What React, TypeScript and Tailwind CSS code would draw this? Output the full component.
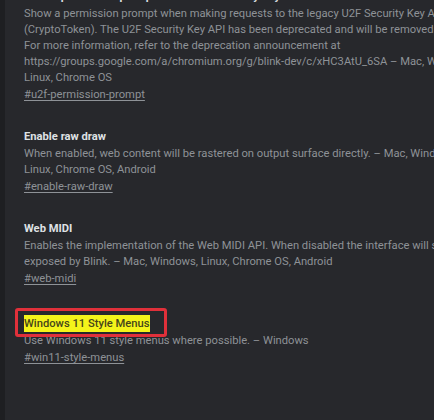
const flags = [
  {
    title: 'Enable permission prompt for the U2F Security Key API',
    lines: [
      'Show a permission prompt when making requests to the legacy U2F Security Key API',
      '(CryptoToken). The U2F Security Key API has been deprecated and will be removed soon.',
      'For more information, refer to the deprecation announcement at',
      'https://groups.google.com/a/chromium.org/g/blink-dev/c/xHC3AtU_6SA – Mac, Windows,',
      'Linux, Chrome OS',
    ],
    tag: '#u2f-permission-prompt',
  },
  {
    title: 'Enable raw draw',
    lines: [
      'When enabled, web content will be rastered on output surface directly. – Mac, Windows,',
      'Linux, Chrome OS, Android',
    ],
    tag: '#enable-raw-draw',
  },
  {
    title: 'Web MIDI',
    lines: [
      'Enables the implementation of the Web MIDI API. When disabled the interface will still be',
      'exposed by Blink. – Mac, Windows, Linux, Chrome OS, Android',
    ],
    tag: '#web-midi',
  },
];

function Flag({ title, lines, tag, highlight }: { title: string; lines: string[]; tag: string; highlight?: boolean }) {
  return (
    <div className="whitespace-nowrap text-[11.2px]">
      {highlight ? (
        <div className="h-[18px] leading-[18px]">
          <span className="relative inline-block">
            {/* red annotation box */}
            <span className="absolute -left-[9px] -right-[17px] -top-[7px] -bottom-[4px] border-[3px] border-[#e0303a] rounded-[3px]" />
            <span className="bg-[#f4f41a] text-[#45451a] font-medium py-[2px]">{title}</span>
          </span>
        </div>
      ) : (
        <div className="h-[18px] leading-[18px] font-bold text-[#dfe1e4]">{title}</div>
      )}
      {lines.map((l) => (
        <div key={l} className="leading-[16px] text-[#8e9297]">
          {l}
        </div>
      ))}
      <div className="mt-[1px] leading-[16px] text-[#8e9297] underline underline-offset-2">{tag}</div>
    </div>
  );
}

export default function App() {
  return (
    <div
      className="h-[420px] w-[434px] overflow-hidden bg-[#27282c] flex"
      style={{ fontFamily: 'Roboto, "Noto Sans", sans-serif' }}
    >
      <div className="w-[5px] bg-[#1e1f22] shrink-0" />
      <div className="pl-[19px] -mt-[12px] flex flex-col">
        <div className="mb-[25px]">
          <Flag {...flags[0]} />
        </div>
        <div className="mb-[25px]">
          <Flag {...flags[1]} />
        </div>
        <div className="mb-[28px]">
          <Flag {...flags[2]} />
        </div>
        <Flag
          title="Windows 11 Style Menus"
          lines={['Use Windows 11 style menus where possible. – Windows']}
          tag="#win11-style-menus"
          highlight
        />
      </div>
    </div>
  );
}
